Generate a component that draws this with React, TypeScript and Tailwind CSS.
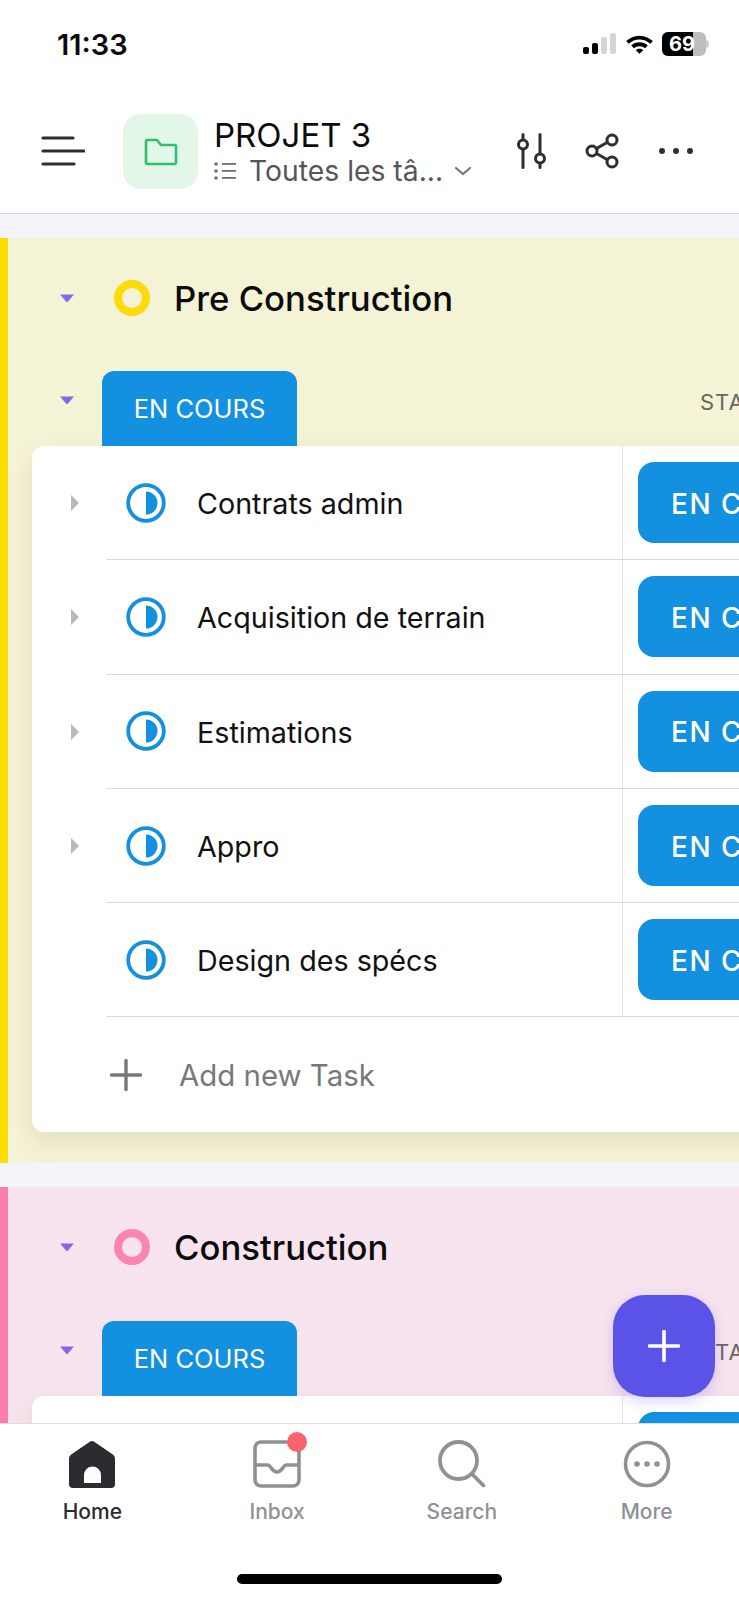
const Caret = () => (
  <svg width="16" height="10" viewBox="0 0 16 10" className="block">
    <path d="M1 1.500h14L9 8.600a1.400 1.400 0 0 1-2 0z" fill="#8468e6" />
  </svg>
);

const ExpandArrow = () => (
  <svg width="8" height="16" viewBox="0 0 8 16" className="block">
    <path d="M0 0l8 8-8 8z" fill="#b9b9b9" />
  </svg>
);

const StatusIcon = () => (
  <svg width="40" height="40" viewBox="0 0 40 40" className="block shrink-0">
    <circle cx="20" cy="20" r="17.800" fill="none" stroke="#1390e0" strokeWidth="3.800" />
    <path d="M20 8.500a11.500 11.500 0 0 1 0 23z" fill="#1390e0" />
  </svg>
);

const MenuIcon = () => (
  <svg width="44" height="30" viewBox="0 0 44 30" className="block">
    <g stroke="#2d2e31" strokeWidth="3.200" strokeLinecap="round">
      <path d="M2 2h30" />
      <path d="M2 15h41" />
      <path d="M2 28h31" />
    </g>
  </svg>
);

const FolderIcon = () => (
  <svg width="34" height="28" viewBox="0 0 34 28" className="block">
    <path
      d="M2 3.500a1.500 1.500 0 0 1 1.500-1.500h9.500l4 5h13.500a1.500 1.500 0 0 1 1.500 1.500v16a1.500 1.500 0 0 1-1.500 1.500h-27a1.500 1.500 0 0 1-1.500-1.500z"
      fill="none"
      stroke="#2fbf71"
      strokeWidth="2.600"
      strokeLinejoin="round"
    />
  </svg>
);

const ListIcon = () => (
  <svg width="22" height="20" viewBox="0 0 22 20" className="block shrink-0">
    <g fill="#6f7074">
      <circle cx="2" cy="3" r="1.800" />
      <circle cx="2" cy="10" r="1.800" />
      <circle cx="2" cy="17" r="1.800" />
      <rect x="8" y="2" width="14" height="1.800" />
      <rect x="8" y="9" width="14" height="1.800" />
      <rect x="8" y="16" width="14" height="1.800" />
    </g>
  </svg>
);

const SlidersIcon = () => (
  <svg width="32" height="36" viewBox="0 0 32 36" className="block">
    <g fill="none" stroke="#2d2e31" strokeWidth="3" strokeLinecap="round">
      <path d="M7 1.500v5M7 17v17.500" />
      <circle cx="7" cy="11.500" r="4.500" />
      <path d="M24 1.500v19M24 31v3.500" />
      <circle cx="24" cy="25.500" r="4.500" />
    </g>
  </svg>
);

const ShareIcon = () => (
  <svg width="34" height="36" viewBox="0 0 34 36" className="block">
    <g fill="none" stroke="#2d2e31" strokeWidth="3">
      <circle cx="7" cy="18" r="5" />
      <circle cx="27" cy="7" r="5" />
      <circle cx="27" cy="29" r="5" />
      <path d="M11.500 15.500l11-6.200M11.500 20.500l11 6.200" />
    </g>
  </svg>
);

const DotsIcon = () => (
  <svg width="34" height="6" viewBox="0 0 34 6" className="block">
    <g fill="#2d2e31">
      <circle cx="3" cy="3" r="3" />
      <circle cx="17" cy="3" r="3" />
      <circle cx="31" cy="3" r="3" />
    </g>
  </svg>
);

const StatusBar = () => (
  <div className="flex h-[88px] shrink-0 items-center justify-between pl-[57px] pr-[30px] bg-white">
    <span className="text-[29px] font-semibold leading-none text-[#0b0b0b]">11:33</span>
    <div className="flex items-center gap-[8px]">
      <svg width="34" height="22" viewBox="0 0 34 22" className="block">
        <rect x="0" y="14" width="6" height="7" rx="2" fill="#000" />
        <rect x="9" y="10" width="6" height="11" rx="2" fill="#000" />
        <rect x="18" y="4" width="6" height="17" rx="2" fill="#d5d5d5" />
        <rect x="27" y="0" width="6" height="21" rx="2" fill="#d5d5d5" />
      </svg>
      <svg width="29" height="22" viewBox="0 0 30 22" className="block">
        <path
          d="M15 2.500C9.500 2.500 5 4.700 1.200 8l2.600 2.800C7 8 10.800 6.400 15 6.400s8 1.600 11.200 4.400L28.800 8C25 4.700 20.500 2.500 15 2.500zM15 9.300c-3.300 0-6.200 1.200-8.500 3.200l2.700 2.800c1.600-1.300 3.500-2.100 5.800-2.100s4.200.8 5.800 2.100l2.700-2.800c-2.300-2-5.200-3.200-8.500-3.200zM15 16c-1.500 0-2.800.5-3.800 1.400L15 21l3.800-3.600C17.800 16.500 16.500 16 15 16z"
          fill="#000"
        />
      </svg>
      <div className="flex items-center">
        <div className="relative flex h-[24px] w-[44px] items-center overflow-hidden rounded-[6px] bg-[#bdbdbd]">
          <div className="h-full w-[31px] bg-black" />
          <span className="absolute left-[7px] text-[20px] font-bold leading-none text-white">69</span>
        </div>
        <div className="h-[8px] w-[3px] rounded-r-full bg-[#cfcfcf]" />
      </div>
    </div>
  </div>
);

const Header = () => (
  <div className="flex h-[126px] shrink-0 items-center border-b border-[#d6d8dc] bg-white">
    <div className="ml-[41px] w-[82px] shrink-0">
      <MenuIcon />
    </div>
    <div className="mt-[2px] flex h-[75px] w-[75px] shrink-0 items-center justify-center rounded-[18px] bg-[#e3f7e9]">
      <FolderIcon />
    </div>
    <div className="ml-[16px] w-[272px] shrink-0 pt-[1px]">
      <div className="text-[33px] leading-[38px] text-[#0b0b0b]">PROJET 3</div>
      <div className="mt-[2px] flex items-center">
        <ListIcon />
        <span className="ml-[13px] text-[28.300px] leading-[30px] text-[#555659]">Toutes les tâ...</span>
        <svg width="18" height="10" viewBox="0 0 18 10" className="ml-[11px] block">
          <path d="M2 2l7 6 7-6" fill="none" stroke="#77787c" strokeWidth="2.200" strokeLinecap="round" />
        </svg>
      </div>
    </div>
    <div className="ml-[30px]">
      <SlidersIcon />
    </div>
    <div className="ml-[37px]">
      <ShareIcon />
    </div>
    <div className="ml-[40px]">
      <DotsIcon />
    </div>
  </div>
);

const TaskRow = ({ name, expandable }: { name: string; expandable: boolean }) => (
  <div className="flex h-[114.300px]">
    <div className="flex w-[74px] shrink-0 items-center pl-[39px]">{expandable && <ExpandArrow />}</div>
    <div className="flex flex-1 border-b border-[#d9d9d9]">
      <div className="flex w-[516px] shrink-0 items-center gap-[31px] pl-[20px]">
        <StatusIcon />
        <span className="pt-[2px] text-[28.700px] text-[#111]">{name}</span>
      </div>
      <div className="flex flex-1 items-center border-l border-[#e4e4e4] pl-[15px]">
        <div className="flex h-[81px] w-[200px] items-center rounded-[16px] bg-[#1390e0] pl-[33px] pt-[2px] text-[28px] font-medium tracking-[1.500px] text-white">
          EN COURS
        </div>
      </div>
    </div>
  </div>
);

const Section = ({
  title,
  barClass,
  bgClass,
  ringClass,
  tagGapClass,
  tasks,
}: {
  title: string;
  barClass: string;
  bgClass: string;
  ringClass: string;
  tagGapClass: string;
  tasks: { name: string; expandable: boolean }[];
}) => (
  <section className={`shrink-0 overflow-hidden border-l-8 pb-[31px] ${barClass} ${bgClass}`}>
    <div className="flex h-[120px] items-center">
      <div className="ml-[51px] w-[55px] shrink-0">
        <Caret />
      </div>
      <div className={`h-[36px] w-[36px] shrink-0 rounded-full border-[8px] ${ringClass}`} />
      <h2 className="ml-[24px] text-[34.700px] font-medium text-[#0b0b0b]">{title}</h2>
    </div>
    <div className={`flex h-[75px] items-start ${tagGapClass}`}>
      <div className="ml-[51px] mt-[24px] w-[43px] shrink-0">
        <Caret />
      </div>
      <div className="flex h-[75px] w-[195px] shrink-0 items-center justify-center rounded-t-[12px] bg-[#1390e0] pt-[2px] text-[25.500px] text-white">
        EN COURS
      </div>
      <span className="ml-[403px] mt-[15px] text-[22px] tracking-[1px] text-[#66675f]">STATUT</span>
    </div>
    <div className="ml-[24px] w-[1000px] rounded-l-[12px] bg-white shadow-[0_10px_24px_rgba(120,110,40,0.14)]">
      {tasks.map((task, i) => (
        <TaskRow key={i} name={task.name} expandable={task.expandable} />
      ))}
      <div className="flex h-[114.500px] items-center pl-[78px]">
        <svg width="32" height="32" viewBox="0 0 32 32" className="block">
          <path d="M16 1.500v29M1.500 16h29" stroke="#77787c" strokeWidth="3.400" strokeLinecap="round" />
        </svg>
        <span className="ml-[37px] pt-[3px] text-[29.400px] text-[#77787c]">Add new Task</span>
      </div>
    </div>
  </section>
);

const firstTasks = [
  { name: "Contrats admin", expandable: true },
  { name: "Acquisition de terrain", expandable: true },
  { name: "Estimations", expandable: true },
  { name: "Appro", expandable: true },
  { name: "Design des spécs", expandable: false },
];

const NavItem = ({ label, active, icon }: { label: string; active?: boolean; icon: React.ReactNode }) => (
  <div className="flex flex-col items-center">
    <div className="flex h-[48px] items-center justify-center">{icon}</div>
    <span className={`mt-[7px] text-[21px] leading-[34px] font-medium ${active ? "text-[#2b2c2f]" : "text-[#8f9197]"}`}>
      {label}
    </span>
  </div>
);

const BottomNav = () => (
  <div className="relative h-[177px] shrink-0 border-t border-[#dcdde0] bg-white pt-[16px]">
    <div className="grid grid-cols-4">
      <NavItem
        label="Home"
        active
        icon={
          <svg width="46" height="47" viewBox="0 0 46 47" className="block">
            <path
              fillRule="evenodd"
              d="M20.800.8a4 4 0 0 1 4.400 0l18.300 12.400a5 5 0 0 1 2.500 4.300V43a4 4 0 0 1-4 4H4a4 4 0 0 1-4-4V17.500a5 5 0 0 1 2.500-4.300zM15 42V34a8.500 8.500 0 0 1 17 0v8z"
              fill="#2b2c2f"
            />
          </svg>
        }
      />
      <NavItem
        label="Inbox"
        icon={
          <div className="relative">
            <svg width="48" height="48" viewBox="0 0 48 48" className="block">
              <rect x="2" y="2" width="44" height="44" rx="6" fill="none" stroke="#8f9197" strokeWidth="3.600" />
              <path
                d="M2 25h13c3 0 3.500 7 9 7s6-7 9-7h13"
                fill="none"
                stroke="#8f9197"
                strokeWidth="3.600"
              />
            </svg>
            <div className="absolute -right-[6px] -top-[8px] h-[20px] w-[20px] rounded-full bg-[#f9636b]" />
          </div>
        }
      />
      <NavItem
        label="Search"
        icon={
          <svg width="48" height="48" viewBox="0 0 48 48" className="block">
            <circle cx="20.500" cy="20.500" r="18.500" fill="none" stroke="#8f9197" strokeWidth="3.800" />
            <path d="M34 34l11.500 11.500" stroke="#8f9197" strokeWidth="3.800" strokeLinecap="round" />
          </svg>
        }
      />
      <NavItem
        label="More"
        icon={
          <svg width="48" height="48" viewBox="0 0 48 48" className="block">
            <circle cx="24" cy="24" r="21.500" fill="none" stroke="#8f9197" strokeWidth="3.600" />
            <circle cx="14" cy="24" r="2.800" fill="#8f9197" />
            <circle cx="24" cy="24" r="2.800" fill="#8f9197" />
            <circle cx="34" cy="24" r="2.800" fill="#8f9197" />
          </svg>
        }
      />
    </div>
    <div className="absolute bottom-[16px] left-[237px] h-[10px] w-[265px] rounded-full bg-black" />
  </div>
);

const App = () => (
  <div className="relative flex h-[1600px] w-[739px] flex-col overflow-hidden bg-white font-['Inter','Noto_Sans',sans-serif]">
    <StatusBar />
    <Header />
    <main className="flex min-h-0 flex-1 flex-col gap-[24px] overflow-hidden bg-[#f3f5fa] pt-[24px]">
      <Section
        title="Pre Construction"
        barClass="border-[#fbdc00]"
        bgClass="bg-[#f5f3d5]"
        ringClass="border-[#fbdc0a]"
        tagGapClass="mt-[13px]"
        tasks={firstTasks}
      />
      <Section
        title="Construction"
        barClass="border-[#fb7fab]"
        bgClass="bg-[#f8e4ee]"
        ringClass="border-[#fb85ae]"
        tagGapClass="mt-[14px]"
        tasks={firstTasks}
      />
    </main>
    <BottomNav />

    {/* Floating add button */}
    <button className="absolute left-[613px] top-[1295px] flex h-[102px] w-[102px] items-center justify-center rounded-[32px] bg-[#5b52e8] shadow-[0_4px_14px_rgba(91,82,232,0.25)]">
      <svg width="32" height="32" viewBox="0 0 32 32" className="block">
        <path d="M16 1.500v29M1.500 16h29" stroke="#fff" strokeWidth="3.600" strokeLinecap="round" />
      </svg>
    </button>
  </div>
);

export default App;
